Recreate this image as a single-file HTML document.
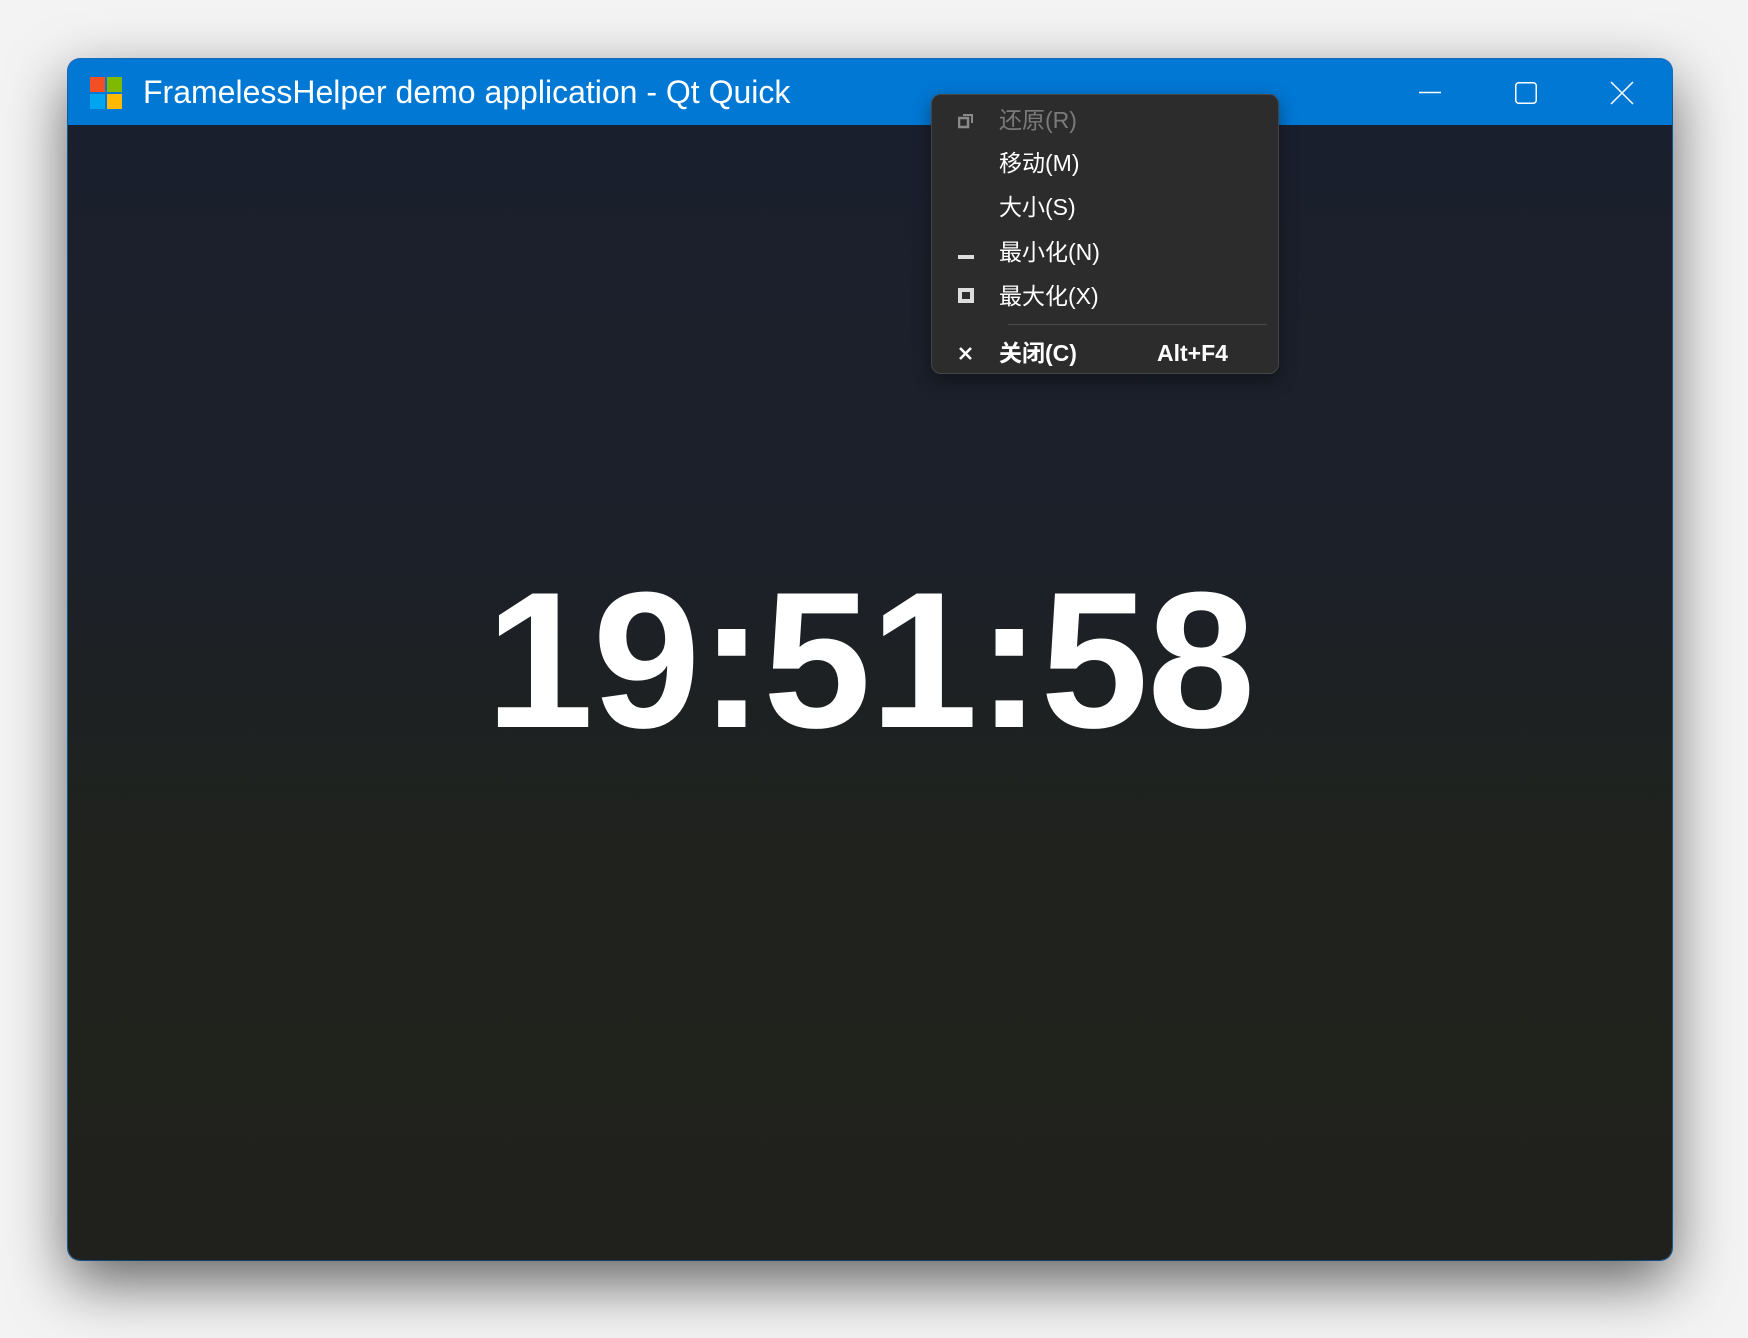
<!DOCTYPE html>
<html><head><meta charset="utf-8"><style>
html,body{margin:0;padding:0;width:1748px;height:1338px;overflow:hidden;background:#f3f3f3;font-family:"Liberation Sans","Noto Sans CJK SC",sans-serif;}
.win{position:absolute;left:68px;top:59px;width:1604px;height:1201px;border-radius:12px;overflow:hidden;box-shadow:0 22px 60px rgba(0,0,0,0.6),0 0 0 1px #1a78d0;background:linear-gradient(180deg,#1a1f2e 0%,#1c2029 40%,#1f221d 65%,#20211c 100%);}
.tb{position:absolute;left:0;top:0;width:100%;height:66px;background:#0078d4;}
.logo{position:absolute;left:22px;top:18px;width:32px;height:32px;}
.logo div{position:absolute;width:15px;height:15px;}
.title{position:absolute;left:75px;top:13px;color:#fff;font-size:32px;line-height:40px;white-space:nowrap;}
.clock{position:absolute;left:0;width:100%;top:505px;text-align:center;color:#fff;font-weight:bold;font-size:194px;line-height:194px;letter-spacing:-1px;}
.menu{position:absolute;left:931px;top:94px;width:348px;height:280px;background:#2c2c2c;border:1px solid #454545;border-radius:10px;box-sizing:border-box;box-shadow:0 6px 18px rgba(0,0,0,0.4);}
.it{position:absolute;left:67px;color:#fff;font-size:23px;line-height:30px;white-space:nowrap;}
</style></head><body>
<div class="win">
 <div class="tb">
  <div class="logo"><div style="left:0;top:0;background:#f25022"></div><div style="left:17px;top:0;background:#7fba00"></div><div style="left:0;top:17px;background:#00a4ef"></div><div style="left:17px;top:17px;background:#ffb900"></div></div>
  <div class="title">FramelessHelper demo application - Qt Quick</div>
  <svg style="position:absolute;left:1340px;top:20px" width="260" height="30" viewBox="0 0 260 30">
   <line x1="11" y1="13.5" x2="33" y2="13.5" stroke="#fff" stroke-width="1.5"/>
   <rect x="107.75" y="3.75" width="20.5" height="20.5" rx="3" fill="none" stroke="#fff" stroke-width="1.5"/>
   <path d="M203 3 L225 25 M225 3 L203 25" stroke="#fff" stroke-width="1.5"/>
  </svg>
 </div>
 <div class="clock">19:51:58</div>
</div>
<div class="menu">
 <svg style="position:absolute;left:26px;top:18px" width="16" height="16"><rect x="1" y="5" width="9" height="9" fill="none" stroke="#8a8a8a" stroke-width="2.5"/><path d="M5 2 H14 V10" fill="none" stroke="#8a8a8a" stroke-width="2"/></svg>
 <div class="it" style="top:10px;color:#7a7a7a">还原(R)</div>
 <div class="it" style="top:53px">移动(M)</div>
 <div class="it" style="top:97px">大小(S)</div>
 <div style="position:absolute;left:26px;top:160px;width:16px;height:4px;background:#ddd"></div>
 <div class="it" style="top:142px">最小化(N)</div>
 <div style="position:absolute;left:26px;top:193px;width:16px;height:15px;box-sizing:border-box;border:4px solid #ddd"></div>
 <div class="it" style="top:186px">最大化(X)</div>
 <div style="position:absolute;left:76px;top:229px;width:259px;height:1px;background:#4a4a4a"></div>
 <svg style="position:absolute;left:26px;top:251px" width="15" height="15"><path d="M2 2 L13 13 M13 2 L2 13" stroke="#fff" stroke-width="2.6"/></svg>
 <div class="it" style="top:243px;font-weight:bold">关闭(C)</div>
 <div class="it" style="top:243px;left:225px;font-weight:bold">Alt+F4</div>
</div>
</body></html>
